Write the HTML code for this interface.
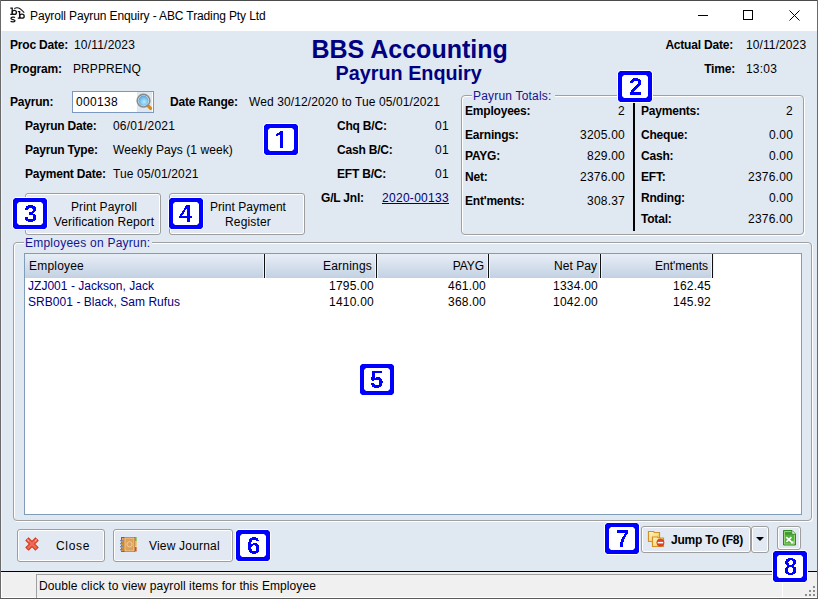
<!DOCTYPE html><html><head><meta charset="utf-8"><style>
html,body{margin:0;padding:0;}
body{width:818px;height:599px;overflow:hidden;position:relative;background:#e0e8f1;font-family:"Liberation Sans",sans-serif;}
.a{position:absolute;box-sizing:content-box;}
.t{position:absolute;white-space:nowrap;}
</style></head><body>
<div class="a" style="left:0px;top:0px;width:818px;height:599px;background:#e0e8f1;"></div>
<div class="a" style="left:0px;top:0px;width:818px;height:31px;background:#ffffff;"></div>
<div class="a" style="left:0px;top:0px;width:818px;height:1px;background:#4b4b4b;"></div>
<div class="a" style="left:0px;top:0px;width:1px;height:599px;background:#6a6a6a;"></div>
<div class="a" style="left:1px;top:31px;width:1px;height:540px;background:#eef3f9;"></div>
<div class="a" style="left:1px;top:572px;width:1px;height:26px;background:#ffffff;"></div>
<div class="a" style="left:1px;top:597px;width:816px;height:1px;background:#ffffff;"></div>
<div class="a" style="left:817px;top:0px;width:1px;height:599px;background:#6a6a6a;"></div>
<div class="a" style="left:0px;top:598px;width:818px;height:1px;background:#5a5a5a;"></div>
<div class="a" style="left:1px;top:571px;width:816px;height:1px;background:#000;"></div>
<div class="a" style="left:2px;top:572px;width:815px;height:25px;background:#f0f0f0;"></div>
<div class="a" style="left:36px;top:574px;width:746px;height:1px;background:#a0a0a0;"></div>
<div class="a" style="left:36px;top:574px;width:1px;height:24px;background:#a0a0a0;"></div>
<div class="a" style="left:782px;top:574px;width:1px;height:24px;background:#ffffff;"></div>
<svg class="a" style="left:0px;top:0px" width="30" height="30" viewBox="0 0 30 30">
<g stroke="#111" stroke-width="1.3" fill="none">
<path d="M10.3,8.2 H12.2 V14.4 H10.3"/>
<ellipse cx="14.3" cy="12.4" rx="2.1" ry="2.0"/>
<path d="M15,17.6 C14.2,16.9 11,16.8 11,18.4 C11,19.8 15,19.3 15,20.8 C15,22.3 11.6,22.1 10.6,21.3"/>
<path d="M17.8,11.6 H19.6 V18.2 H17.8"/>
<ellipse cx="21.9" cy="16.2" rx="2.3" ry="2.0"/>
<path d="M14.3,8.6 Q18.5,5.6 24.2,12.6" stroke-width="1.1"/>
</g>
</svg>
<div class="t" style="top:10.00px;font-size:12px;line-height:12px;color:#000;letter-spacing:0.066px;left:30px;letter-spacing:-0.12px;">Payroll Payrun Enquiry - ABC Trading Pty Ltd</div>
<div class="a" style="left:698px;top:15px;width:10px;height:1px;background:#000;"></div>
<div class="a" style="left:743px;top:10px;width:8px;height:8px;border:1px solid #000;"></div>
<svg class="a" style="left:789px;top:10px" width="11" height="11" viewBox="0 0 11 11"><path d="M0.5,0.5 L10.5,10.5 M10.5,0.5 L0.5,10.5" stroke="#000" stroke-width="1"/></svg>
<div class="t" style="top:39.00px;font-size:12px;line-height:12px;color:#000000;font-weight:bold;letter-spacing:-0.2px;left:10px;">Proc Date:</div>
<div class="t" style="top:39.00px;font-size:12px;line-height:12px;color:#000000;letter-spacing:0.194px;left:74px;">10/11/2023</div>
<div class="t" style="top:63.00px;font-size:12px;line-height:12px;color:#000000;font-weight:bold;letter-spacing:-0.2px;left:10px;">Program:</div>
<div class="t" style="top:63.00px;font-size:12px;line-height:12px;color:#000000;letter-spacing:0.082px;left:73px;">PRPPRENQ</div>
<div class="t" style="top:36.50px;font-size:25px;line-height:25px;color:#000080;font-weight:bold;letter-spacing:-0.2px;left:409.6px;transform:translateX(-50%);letter-spacing:0;">BBS Accounting</div>
<div class="t" style="top:64.10px;font-size:19.8px;line-height:19.8px;color:#000080;font-weight:bold;letter-spacing:-0.2px;left:408.7px;transform:translateX(-50%);letter-spacing:0;">Payrun Enquiry</div>
<div class="t" style="top:39.00px;font-size:12px;line-height:12px;color:#000000;font-weight:bold;letter-spacing:-0.2px;right:85px;">Actual Date:</div>
<div class="t" style="top:39.00px;font-size:12px;line-height:12px;color:#000000;left:746px;letter-spacing:0.1px;">10/11/2023</div>
<div class="t" style="top:63.00px;font-size:12px;line-height:12px;color:#000000;font-weight:bold;letter-spacing:-0.2px;right:83px;">Time:</div>
<div class="t" style="top:63.00px;font-size:12px;line-height:12px;color:#000000;letter-spacing:0.194px;left:746px;">13:03</div>
<div class="t" style="top:96.00px;font-size:12px;line-height:12px;color:#000000;font-weight:bold;letter-spacing:-0.2px;left:10px;">Payrun:</div>
<div class="a" style="left:72px;top:91px;width:80px;height:20px;border:1px solid #7a98c0;background:#fff;"></div>
<div class="a" style="left:137px;top:92px;width:15px;height:20px;background:#dfe7f0;"></div>
<svg class="a" style="left:132px;top:89px" width="24" height="26" viewBox="0 0 24 26">
<defs><radialGradient id="mg" cx="0.55" cy="0.6" r="0.6"><stop offset="0" stop-color="#b8ecfb"/><stop offset="1" stop-color="#4a9fe0"/></radialGradient></defs>
<path d="M15.2,15.8 L18.6,19.4" stroke="#d88a1a" stroke-width="3.2" stroke-linecap="round"/>
<circle cx="11.5" cy="11.7" r="5.6" fill="url(#mg)" stroke="#fff" stroke-width="1"/>
<circle cx="11.5" cy="11.7" r="6.3" fill="none" stroke="#8a8a8a" stroke-width="1.6"/>
</svg>
<div class="t" style="top:96.00px;font-size:12px;line-height:12px;color:#000000;letter-spacing:0.326px;left:76px;">000138</div>
<div class="t" style="top:96.00px;font-size:12px;line-height:12px;color:#000000;font-weight:bold;letter-spacing:-0.2px;left:170px;">Date Range:</div>
<div class="t" style="top:96.00px;font-size:12px;line-height:12px;color:#000000;letter-spacing:0.100px;left:249px;">Wed 30/12/2020 to Tue 05/01/2021</div>
<div class="t" style="top:120.00px;font-size:12px;line-height:12px;color:#000000;font-weight:bold;letter-spacing:-0.2px;left:25px;">Payrun Date:</div>
<div class="t" style="top:120.00px;font-size:12px;line-height:12px;color:#000000;letter-spacing:0.194px;left:113px;">06/01/2021</div>
<div class="t" style="top:144.00px;font-size:12px;line-height:12px;color:#000000;font-weight:bold;letter-spacing:-0.2px;left:25px;">Payrun Type:</div>
<div class="t" style="top:144.00px;font-size:12px;line-height:12px;color:#000000;letter-spacing:0.065px;left:113px;">Weekly Pays (1 week)</div>
<div class="t" style="top:168.00px;font-size:12px;line-height:12px;color:#000000;font-weight:bold;letter-spacing:-0.2px;left:25px;">Payment Date:</div>
<div class="t" style="top:168.00px;font-size:12px;line-height:12px;color:#000000;letter-spacing:0.138px;left:113px;">Tue 05/01/2021</div>
<div class="t" style="top:120.00px;font-size:12px;line-height:12px;color:#000000;font-weight:bold;letter-spacing:-0.2px;left:337px;">Chq B/C:</div>
<div class="t" style="top:120.00px;font-size:12px;line-height:12px;color:#000000;letter-spacing:0.326px;right:369px;">01</div>
<div class="t" style="top:144.00px;font-size:12px;line-height:12px;color:#000000;font-weight:bold;letter-spacing:-0.2px;left:337px;">Cash B/C:</div>
<div class="t" style="top:144.00px;font-size:12px;line-height:12px;color:#000000;letter-spacing:0.326px;right:369px;">01</div>
<div class="t" style="top:168.00px;font-size:12px;line-height:12px;color:#000000;font-weight:bold;letter-spacing:-0.2px;left:337px;">EFT B/C:</div>
<div class="t" style="top:168.00px;font-size:12px;line-height:12px;color:#000000;letter-spacing:0.326px;right:369px;">01</div>
<div class="t" style="top:192.00px;font-size:12px;line-height:12px;color:#000000;font-weight:bold;letter-spacing:-0.2px;left:321px;">G/L Jnl:</div>
<div class="t" style="top:192.00px;font-size:12px;line-height:12px;color:#000080;letter-spacing:0.294px;right:369px;text-decoration:underline;">2020-00133</div>
<div class="a" style="left:25px;top:193px;width:134px;height:40px;border:1px solid #9e9e9e;border-radius:3px;background:#e2e9f2;box-shadow:inset 0 0 0 1px #fff;"></div>
<div class="t" style="top:201.00px;font-size:12px;line-height:12px;color:#000000;letter-spacing:0.101px;left:104px;transform:translateX(-50%);">Print Payroll</div>
<div class="t" style="top:216.00px;font-size:12px;line-height:12px;color:#000000;letter-spacing:0.120px;left:104px;transform:translateX(-50%);">Verification Report</div>
<div class="a" style="left:169px;top:193px;width:134px;height:40px;border:1px solid #9e9e9e;border-radius:3px;background:#e2e9f2;box-shadow:inset 0 0 0 1px #fff;"></div>
<div class="t" style="top:201.00px;font-size:12px;line-height:12px;color:#000000;letter-spacing:0.049px;left:248px;transform:translateX(-50%);">Print Payment</div>
<div class="t" style="top:216.00px;font-size:12px;line-height:12px;color:#000000;letter-spacing:0.165px;left:248px;transform:translateX(-50%);">Register</div>
<div class="a" style="left:461px;top:95px;width:341px;height:138px;border:1px solid #a0a0a0;border-radius:4px;box-shadow:inset 1px 1px 0 #fff, 1px 1px 0 #fff;"></div>
<div class="a" style="left:472px;top:89px;width:83px;height:12px;background:#e0e8f1;"></div>
<div class="t" style="top:90.00px;font-size:12px;line-height:12px;color:#14148f;left:473px;letter-spacing:0.194px;">Payrun Totals:</div>
<div class="a" style="left:633px;top:103px;width:2px;height:128px;background:#000;"></div>
<div class="t" style="top:105.00px;font-size:12px;line-height:12px;color:#000000;font-weight:bold;letter-spacing:-0.2px;left:465px;">Employees:</div>
<div class="t" style="top:105.00px;font-size:12px;line-height:12px;color:#000000;letter-spacing:0.326px;right:193px;">2</div>
<div class="t" style="top:129.00px;font-size:12px;line-height:12px;color:#000000;font-weight:bold;letter-spacing:-0.2px;left:465px;">Earnings:</div>
<div class="t" style="top:129.00px;font-size:12px;line-height:12px;color:#000000;letter-spacing:0.232px;right:193px;">3205.00</div>
<div class="t" style="top:150.00px;font-size:12px;line-height:12px;color:#000000;font-weight:bold;letter-spacing:-0.2px;left:465px;">PAYG:</div>
<div class="t" style="top:150.00px;font-size:12px;line-height:12px;color:#000000;letter-spacing:0.216px;right:193px;">829.00</div>
<div class="t" style="top:171.00px;font-size:12px;line-height:12px;color:#000000;font-weight:bold;letter-spacing:-0.2px;left:465px;">Net:</div>
<div class="t" style="top:171.00px;font-size:12px;line-height:12px;color:#000000;letter-spacing:0.232px;right:193px;">2376.00</div>
<div class="t" style="top:195.00px;font-size:12px;line-height:12px;color:#000000;font-weight:bold;letter-spacing:-0.2px;left:465px;">Ent'ments:</div>
<div class="t" style="top:195.00px;font-size:12px;line-height:12px;color:#000000;letter-spacing:0.216px;right:193px;">308.37</div>
<div class="t" style="top:105.00px;font-size:12px;line-height:12px;color:#000000;font-weight:bold;letter-spacing:-0.2px;left:641px;">Payments:</div>
<div class="t" style="top:105.00px;font-size:12px;line-height:12px;color:#000000;letter-spacing:0.326px;right:25px;">2</div>
<div class="t" style="top:129.00px;font-size:12px;line-height:12px;color:#000000;font-weight:bold;letter-spacing:-0.2px;left:641px;">Cheque:</div>
<div class="t" style="top:129.00px;font-size:12px;line-height:12px;color:#000000;letter-spacing:0.161px;right:25px;">0.00</div>
<div class="t" style="top:150.00px;font-size:12px;line-height:12px;color:#000000;font-weight:bold;letter-spacing:-0.2px;left:641px;">Cash:</div>
<div class="t" style="top:150.00px;font-size:12px;line-height:12px;color:#000000;letter-spacing:0.161px;right:25px;">0.00</div>
<div class="t" style="top:171.00px;font-size:12px;line-height:12px;color:#000000;font-weight:bold;letter-spacing:-0.2px;left:641px;">EFT:</div>
<div class="t" style="top:171.00px;font-size:12px;line-height:12px;color:#000000;letter-spacing:0.232px;right:25px;">2376.00</div>
<div class="t" style="top:192.00px;font-size:12px;line-height:12px;color:#000000;font-weight:bold;letter-spacing:-0.2px;left:641px;">Rnding:</div>
<div class="t" style="top:192.00px;font-size:12px;line-height:12px;color:#000000;letter-spacing:0.161px;right:25px;">0.00</div>
<div class="t" style="top:213.00px;font-size:12px;line-height:12px;color:#000000;font-weight:bold;letter-spacing:-0.2px;left:641px;">Total:</div>
<div class="t" style="top:213.00px;font-size:12px;line-height:12px;color:#000000;letter-spacing:0.232px;right:25px;">2376.00</div>
<div class="a" style="left:13px;top:242px;width:797px;height:277px;border:1px solid #a0a0a0;border-radius:4px;box-shadow:inset 1px 1px 0 #fff, 1px 1px 0 #fff;"></div>
<div class="a" style="left:24px;top:236px;width:128px;height:12px;background:#e0e8f1;"></div>
<div class="t" style="top:237.00px;font-size:12px;line-height:12px;color:#14148f;left:25px;letter-spacing:0.233px;">Employees on Payrun:</div>
<div class="a" style="left:24px;top:253px;width:776px;height:260px;border:1px solid #7f9db9;background:#fff;"></div>
<div class="a" style="left:25px;top:254px;width:688px;height:24px;background:linear-gradient(#e8eef6,#c2d1e3);"></div>
<div class="a" style="left:263px;top:254px;width:3px;height:24px;background:#f0f4f8;"></div>
<div class="a" style="left:264px;top:254px;width:1px;height:24px;background:#101010;"></div>
<div class="a" style="left:375px;top:254px;width:3px;height:24px;background:#f0f4f8;"></div>
<div class="a" style="left:376px;top:254px;width:1px;height:24px;background:#101010;"></div>
<div class="a" style="left:487px;top:254px;width:3px;height:24px;background:#f0f4f8;"></div>
<div class="a" style="left:488px;top:254px;width:1px;height:24px;background:#101010;"></div>
<div class="a" style="left:599px;top:254px;width:3px;height:24px;background:#f0f4f8;"></div>
<div class="a" style="left:600px;top:254px;width:1px;height:24px;background:#101010;"></div>
<div class="a" style="left:711px;top:254px;width:3px;height:24px;background:#f0f4f8;"></div>
<div class="a" style="left:712px;top:254px;width:1px;height:24px;background:#101010;"></div>
<div class="t" style="top:260.00px;font-size:12px;line-height:12px;color:#000000;letter-spacing:0.205px;left:29px;">Employee</div>
<div class="t" style="top:260.00px;font-size:12px;line-height:12px;color:#000000;letter-spacing:0.205px;right:446px;">Earnings</div>
<div class="t" style="top:260.00px;font-size:12px;line-height:12px;color:#000000;letter-spacing:-0.086px;right:334px;">PAYG</div>
<div class="t" style="top:260.00px;font-size:12px;line-height:12px;color:#000000;letter-spacing:0.045px;right:221px;">Net Pay</div>
<div class="t" style="top:260.00px;font-size:12px;line-height:12px;color:#000000;letter-spacing:0.002px;right:110px;">Ent'ments</div>
<div class="t" style="top:280.00px;font-size:12px;line-height:12px;color:#000080;letter-spacing:0.028px;left:28px;">JZJ001 - Jackson, Jack</div>
<div class="t" style="top:280.00px;font-size:12px;line-height:12px;color:#000000;letter-spacing:0.232px;right:444px;">1795.00</div>
<div class="t" style="top:280.00px;font-size:12px;line-height:12px;color:#000000;letter-spacing:0.216px;right:332px;">461.00</div>
<div class="t" style="top:280.00px;font-size:12px;line-height:12px;color:#000000;letter-spacing:0.232px;right:220px;">1334.00</div>
<div class="t" style="top:280.00px;font-size:12px;line-height:12px;color:#000000;letter-spacing:0.216px;right:107px;">162.45</div>
<div class="t" style="top:296.00px;font-size:12px;line-height:12px;color:#000080;letter-spacing:0.051px;left:28px;">SRB001 - Black, Sam Rufus</div>
<div class="t" style="top:296.00px;font-size:12px;line-height:12px;color:#000000;letter-spacing:0.232px;right:444px;">1410.00</div>
<div class="t" style="top:296.00px;font-size:12px;line-height:12px;color:#000000;letter-spacing:0.216px;right:332px;">368.00</div>
<div class="t" style="top:296.00px;font-size:12px;line-height:12px;color:#000000;letter-spacing:0.232px;right:220px;">1042.00</div>
<div class="t" style="top:296.00px;font-size:12px;line-height:12px;color:#000000;letter-spacing:0.216px;right:107px;">145.92</div>
<svg class="a" style="left:359px;top:363px" width="36" height="33" viewBox="0 0 36 33">
<polygon points="3,0 33,0 36,3 36,30 33,33 3,33 0,30 0,3" fill="#fff"/>
<polygon points="3,1 33,1 35,3 35,30 33,32 3,32 1,30 1,3" fill="#0000ff"/>
<polygon points="7,5 29,5 31,7 31,26 29,28 7,28 5,26 5,7" fill="#fff"/>
</svg>
<svg class="a" style="left:360px;top:364px" width="34" height="31" viewBox="0 0 34 31" shape-rendering="crispEdges"><g fill="#0000ff"><rect x="12" y="7" width="10" height="1"/><rect x="12" y="8" width="10" height="1"/><rect x="12" y="9" width="3" height="1"/><rect x="12" y="10" width="3" height="1"/><rect x="12" y="11" width="3" height="1"/><rect x="12" y="12" width="3" height="1"/><rect x="11" y="13" width="4" height="1"/><rect x="16" y="13" width="4" height="1"/><rect x="11" y="14" width="10" height="1"/><rect x="11" y="15" width="11" height="1"/><rect x="12" y="16" width="2" height="1"/><rect x="19" y="16" width="3" height="1"/><rect x="19" y="17" width="4" height="1"/><rect x="19" y="18" width="4" height="1"/><rect x="11" y="19" width="3" height="1"/><rect x="19" y="19" width="3" height="1"/><rect x="11" y="20" width="4" height="1"/><rect x="19" y="20" width="3" height="1"/><rect x="12" y="21" width="10" height="1"/><rect x="12" y="22" width="9" height="1"/><rect x="14" y="23" width="5" height="1"/></g></svg>
<div class="a" style="left:17px;top:529px;width:86px;height:31px;border:1px solid #9e9e9e;border-radius:3px;background:#e2e9f2;box-shadow:inset 0 0 0 1px #fff;"></div>
<svg class="a" style="left:24px;top:536px" width="16" height="16" viewBox="0 0 16 16">
<path d="M4.6,4.6 L11.4,11.4 M11.4,4.6 L4.6,11.4" stroke="#cf3a22" stroke-width="4.8" stroke-linecap="square"/>
<path d="M4.6,4.6 L11.4,11.4 M11.4,4.6 L4.6,11.4" stroke="#f06a52" stroke-width="2.6" stroke-linecap="square"/>
<path d="M3.2,3.6 L5,5.2 M12.8,3.6 L11,5.2" stroke="#ffc8b8" stroke-width="1" />
</svg>
<div class="t" style="top:540.00px;font-size:12px;line-height:12px;color:#000000;left:56px;letter-spacing:0.7px;">Close</div>
<div class="a" style="left:113px;top:529px;width:118px;height:31px;border:1px solid #9e9e9e;border-radius:3px;background:#e2e9f2;box-shadow:inset 0 0 0 1px #fff;"></div>
<svg class="a" style="left:116px;top:533px" width="24" height="24" viewBox="0 0 24 24">
<rect x="5" y="4" width="14" height="15" rx="0.8" fill="#b87026"/>
<rect x="5.5" y="4.5" width="13" height="14" fill="#c98538" stroke="#9a5c1c" stroke-width="1"/>
<rect x="9" y="5" width="9" height="13" fill="#dea15a" stroke="#f2c890" stroke-width="1"/>
<rect x="19" y="4" width="1.6" height="4.5" fill="#6cb82a"/>
<rect x="19" y="9" width="1.6" height="4.5" fill="#f4b820"/>
<rect x="19" y="14" width="1.6" height="4.5" fill="#e84818"/>
<circle cx="13.5" cy="11.3" r="2.6" fill="none" stroke="#f4d4a0" stroke-width="0.9"/>
<g fill="#7a8aa8"><rect x="4" y="7" width="3" height="1.4"/><rect x="4" y="10" width="3" height="1.4"/><rect x="4" y="13" width="3" height="1.4"/><rect x="4" y="16" width="3" height="1.4"/></g>
<g fill="#e89a30"><rect x="5" y="8.2" width="2" height="1"/><rect x="5" y="11.2" width="2" height="1"/><rect x="5" y="14.2" width="2" height="1"/><rect x="5" y="17.2" width="2" height="1"/></g>
<rect x="6" y="5.5" width="1.5" height="1" fill="#f4d8b0"/>
</svg>
<div class="t" style="top:540.00px;font-size:12px;line-height:12px;color:#000000;letter-spacing:0.192px;left:149px;">View Journal</div>
<div class="a" style="left:641px;top:526px;width:108px;height:25px;border:1px solid #9e9e9e;border-radius:3px;background:#e2e9f2;box-shadow:inset 0 0 0 1px #fff;"></div>
<svg class="a" style="left:644px;top:527px" width="24" height="24" viewBox="0 0 24 24">
<defs><linearGradient id="fg" x1="0" y1="0" x2="1" y2="1"><stop offset="0" stop-color="#fff8c8"/><stop offset="1" stop-color="#f2c850"/></linearGradient></defs>
<path d="M4.5,4.5 h5 l1,1 h5 v9 h-11 z" fill="url(#fg)" stroke="#d39028" stroke-width="1.2"/>
<path d="M8.5,10 h5 l1,1 h5 v8.5 h-11 z" fill="url(#fg)" stroke="#d39028" stroke-width="1.2"/>
<circle cx="16.4" cy="15.6" r="3.6" fill="#e2432a" stroke="#c83218" stroke-width="0.6"/>
<rect x="13.6" y="14.9" width="5.6" height="1.5" fill="#fff"/>
</svg>
<div class="t" style="top:534.00px;font-size:12px;line-height:12px;color:#000000;font-weight:bold;letter-spacing:-0.2px;left:671px;">Jump To (F8)</div>
<div class="a" style="left:751px;top:526px;width:16px;height:25px;border:1px solid #9e9e9e;border-radius:3px;background:#e2e9f2;box-shadow:inset 0 0 0 1px #fff;"></div>
<svg class="a" style="left:756px;top:537px" width="8" height="5" viewBox="0 0 8 5"><polygon points="0,0 8,0 4,4" fill="#000"/></svg>
<div class="a" style="left:777px;top:526px;width:22px;height:22px;border:1px solid #9e9e9e;border-radius:3px;background:#e2e9f2;box-shadow:inset 0 0 0 1px #fff;"></div>
<svg class="a" style="left:774px;top:524px" width="30" height="28" viewBox="0 0 30 28">
<path d="M9.5,6.5 h8.5 l3.5,3.5 v11 h-12 z" fill="#55b03c" stroke="#2e8a20" stroke-width="1"/>
<path d="M10.5,7.5 h7 l3,3 v9.5 h-10 z" fill="none" stroke="#93d577" stroke-width="1"/>
<rect x="11" y="8" width="6" height="3" fill="#449c30"/>
<path d="M17.5,6.5 v4 h4" fill="#2e8a20"/>
<path d="M18.3,7 v2.7 h2.7 z" fill="#fff"/>
<path d="M12.2,13.2 L18.2,18.6 M17.4,13.2 L12.4,17.8" stroke="#fff" stroke-width="1.7"/>
<path d="M16.8,19.6 L19.6,19.6 L19.3,16.6 z" fill="#fff"/>
</svg>
<div class="a" style="left:813px;top:586px;width:2px;height:2px;background:#8c8c8c;"></div>
<div class="a" style="left:809px;top:590px;width:2px;height:2px;background:#8c8c8c;"></div>
<div class="a" style="left:813px;top:590px;width:2px;height:2px;background:#8c8c8c;"></div>
<div class="a" style="left:805px;top:594px;width:2px;height:2px;background:#8c8c8c;"></div>
<div class="a" style="left:809px;top:594px;width:2px;height:2px;background:#8c8c8c;"></div>
<div class="a" style="left:813px;top:594px;width:2px;height:2px;background:#8c8c8c;"></div>
<div class="t" style="top:580.00px;font-size:12px;line-height:12px;color:#000000;letter-spacing:0.094px;left:39px;">Double click to view payroll items for this Employee</div>
<svg class="a" style="left:263px;top:123px" width="36" height="33" viewBox="0 0 36 33">
<polygon points="3,0 33,0 36,3 36,30 33,33 3,33 0,30 0,3" fill="#fff"/>
<polygon points="3,1 33,1 35,3 35,30 33,32 3,32 1,30 1,3" fill="#0000ff"/>
<polygon points="7,5 29,5 31,7 31,26 29,28 7,28 5,26 5,7" fill="#fff"/>
</svg>
<svg class="a" style="left:264px;top:124px" width="34" height="31" viewBox="0 0 34 31" shape-rendering="crispEdges"><g fill="#0000ff"><rect x="16" y="7" width="3" height="17"/><rect x="15" y="8" width="1" height="3"/><rect x="14" y="9" width="1" height="2"/><rect x="13" y="9" width="1" height="3"/><rect x="12" y="10" width="1" height="2"/></g></svg>
<svg class="a" style="left:617px;top:70px" width="36" height="33" viewBox="0 0 36 33">
<polygon points="3,0 33,0 36,3 36,30 33,33 3,33 0,30 0,3" fill="#fff"/>
<polygon points="3,1 33,1 35,3 35,30 33,32 3,32 1,30 1,3" fill="#0000ff"/>
<polygon points="7,5 29,5 31,7 31,26 29,28 7,28 5,26 5,7" fill="#fff"/>
</svg>
<svg class="a" style="left:618px;top:71px" width="34" height="31" viewBox="0 0 34 31" shape-rendering="crispEdges"><g fill="#0000ff"><rect x="15" y="7" width="5" height="1"/><rect x="14" y="8" width="8" height="1"/><rect x="13" y="9" width="10" height="1"/><rect x="12" y="10" width="4" height="1"/><rect x="20" y="10" width="3" height="1"/><rect x="12" y="11" width="3" height="1"/><rect x="20" y="11" width="3" height="1"/><rect x="20" y="12" width="3" height="1"/><rect x="19" y="13" width="4" height="1"/><rect x="18" y="14" width="4" height="1"/><rect x="17" y="15" width="4" height="1"/><rect x="16" y="16" width="4" height="1"/><rect x="15" y="17" width="4" height="1"/><rect x="14" y="18" width="4" height="1"/><rect x="13" y="19" width="4" height="1"/><rect x="13" y="20" width="3" height="1"/><rect x="12" y="21" width="11" height="1"/><rect x="12" y="22" width="11" height="1"/><rect x="12" y="23" width="11" height="1"/></g></svg>
<svg class="a" style="left:12px;top:197px" width="36" height="33" viewBox="0 0 36 33">
<polygon points="3,0 33,0 36,3 36,30 33,33 3,33 0,30 0,3" fill="#fff"/>
<polygon points="3,1 33,1 35,3 35,30 33,32 3,32 1,30 1,3" fill="#0000ff"/>
<polygon points="7,5 29,5 31,7 31,26 29,28 7,28 5,26 5,7" fill="#fff"/>
</svg>
<svg class="a" style="left:13px;top:198px" width="34" height="31" viewBox="0 0 34 31" shape-rendering="crispEdges"><g fill="#0000ff"><rect x="15" y="7" width="5" height="1"/><rect x="13" y="8" width="9" height="1"/><rect x="13" y="9" width="10" height="1"/><rect x="12" y="10" width="4" height="1"/><rect x="19" y="10" width="4" height="1"/><rect x="12" y="11" width="3" height="1"/><rect x="20" y="11" width="3" height="1"/><rect x="20" y="12" width="3" height="1"/><rect x="19" y="13" width="3" height="1"/><rect x="16" y="14" width="5" height="1"/><rect x="16" y="15" width="4" height="1"/><rect x="16" y="16" width="6" height="1"/><rect x="20" y="17" width="3" height="1"/><rect x="20" y="18" width="3" height="1"/><rect x="12" y="19" width="3" height="1"/><rect x="20" y="19" width="3" height="1"/><rect x="12" y="20" width="3" height="1"/><rect x="20" y="20" width="3" height="1"/><rect x="12" y="21" width="11" height="1"/><rect x="13" y="22" width="9" height="1"/><rect x="15" y="23" width="5" height="1"/></g></svg>
<svg class="a" style="left:168px;top:197px" width="36" height="33" viewBox="0 0 36 33">
<polygon points="3,0 33,0 36,3 36,30 33,33 3,33 0,30 0,3" fill="#fff"/>
<polygon points="3,1 33,1 35,3 35,30 33,32 3,32 1,30 1,3" fill="#0000ff"/>
<polygon points="7,5 29,5 31,7 31,26 29,28 7,28 5,26 5,7" fill="#fff"/>
</svg>
<svg class="a" style="left:169px;top:198px" width="34" height="31" viewBox="0 0 34 31" shape-rendering="crispEdges"><g fill="#0000ff"><rect x="17" y="7" width="4" height="1"/><rect x="16" y="8" width="5" height="1"/><rect x="16" y="9" width="5" height="1"/><rect x="15" y="10" width="6" height="1"/><rect x="15" y="11" width="2" height="1"/><rect x="18" y="11" width="3" height="1"/><rect x="14" y="12" width="2" height="1"/><rect x="18" y="12" width="3" height="1"/><rect x="13" y="13" width="3" height="1"/><rect x="18" y="13" width="3" height="1"/><rect x="13" y="14" width="2" height="1"/><rect x="18" y="14" width="3" height="1"/><rect x="12" y="15" width="3" height="1"/><rect x="18" y="15" width="3" height="1"/><rect x="11" y="16" width="3" height="1"/><rect x="18" y="16" width="3" height="1"/><rect x="11" y="17" width="2" height="1"/><rect x="18" y="17" width="3" height="1"/><rect x="10" y="18" width="13" height="1"/><rect x="10" y="19" width="13" height="1"/><rect x="18" y="20" width="3" height="1"/><rect x="18" y="21" width="3" height="1"/><rect x="18" y="22" width="3" height="1"/><rect x="18" y="23" width="3" height="1"/></g></svg>
<svg class="a" style="left:235px;top:529px" width="36" height="33" viewBox="0 0 36 33">
<polygon points="3,0 33,0 36,3 36,30 33,33 3,33 0,30 0,3" fill="#fff"/>
<polygon points="3,1 33,1 35,3 35,30 33,32 3,32 1,30 1,3" fill="#0000ff"/>
<polygon points="7,5 29,5 31,7 31,26 29,28 7,28 5,26 5,7" fill="#fff"/>
</svg>
<svg class="a" style="left:236px;top:530px" width="34" height="31" viewBox="0 0 34 31" shape-rendering="crispEdges"><g fill="#0000ff"><rect x="16" y="7" width="4" height="1"/><rect x="14" y="8" width="8" height="1"/><rect x="13" y="9" width="9" height="1"/><rect x="13" y="10" width="3" height="1"/><rect x="20" y="10" width="3" height="1"/><rect x="13" y="11" width="3" height="1"/><rect x="12" y="12" width="3" height="1"/><rect x="12" y="13" width="3" height="1"/><rect x="17" y="13" width="4" height="1"/><rect x="12" y="14" width="10" height="1"/><rect x="12" y="15" width="5" height="1"/><rect x="19" y="15" width="4" height="1"/><rect x="12" y="16" width="4" height="1"/><rect x="20" y="16" width="3" height="1"/><rect x="12" y="17" width="3" height="1"/><rect x="20" y="17" width="3" height="1"/><rect x="12" y="18" width="3" height="1"/><rect x="20" y="18" width="3" height="1"/><rect x="12" y="19" width="4" height="1"/><rect x="20" y="19" width="3" height="1"/><rect x="13" y="20" width="3" height="1"/><rect x="20" y="20" width="3" height="1"/><rect x="13" y="21" width="10" height="1"/><rect x="14" y="22" width="8" height="1"/><rect x="16" y="23" width="4" height="1"/></g></svg>
<svg class="a" style="left:604px;top:522px" width="36" height="33" viewBox="0 0 36 33">
<polygon points="3,0 33,0 36,3 36,30 33,33 3,33 0,30 0,3" fill="#fff"/>
<polygon points="3,1 33,1 35,3 35,30 33,32 3,32 1,30 1,3" fill="#0000ff"/>
<polygon points="7,5 29,5 31,7 31,26 29,28 7,28 5,26 5,7" fill="#fff"/>
</svg>
<svg class="a" style="left:605px;top:523px" width="34" height="31" viewBox="0 0 34 31" shape-rendering="crispEdges"><g fill="#0000ff"><rect x="12" y="7" width="11" height="1"/><rect x="12" y="8" width="11" height="1"/><rect x="12" y="9" width="11" height="1"/><rect x="20" y="10" width="3" height="1"/><rect x="19" y="11" width="3" height="1"/><rect x="19" y="12" width="2" height="1"/><rect x="18" y="13" width="3" height="1"/><rect x="17" y="14" width="3" height="1"/><rect x="17" y="15" width="3" height="1"/><rect x="16" y="16" width="3" height="1"/><rect x="16" y="17" width="3" height="1"/><rect x="16" y="18" width="3" height="1"/><rect x="15" y="19" width="3" height="1"/><rect x="15" y="20" width="3" height="1"/><rect x="15" y="21" width="3" height="1"/><rect x="15" y="22" width="3" height="1"/><rect x="15" y="23" width="3" height="1"/></g></svg>
<svg class="a" style="left:772px;top:550px" width="36" height="33" viewBox="0 0 36 33">
<polygon points="3,0 33,0 36,3 36,30 33,33 3,33 0,30 0,3" fill="#fff"/>
<polygon points="3,1 33,1 35,3 35,30 33,32 3,32 1,30 1,3" fill="#0000ff"/>
<polygon points="7,5 29,5 31,7 31,26 29,28 7,28 5,26 5,7" fill="#fff"/>
</svg>
<svg class="a" style="left:773px;top:551px" width="34" height="31" viewBox="0 0 34 31" shape-rendering="crispEdges"><g fill="#0000ff"><rect x="15" y="7" width="5" height="1"/><rect x="13" y="8" width="9" height="1"/><rect x="13" y="9" width="4" height="1"/><rect x="19" y="9" width="4" height="1"/><rect x="12" y="10" width="4" height="1"/><rect x="20" y="10" width="3" height="1"/><rect x="12" y="11" width="3" height="1"/><rect x="20" y="11" width="3" height="1"/><rect x="12" y="12" width="4" height="1"/><rect x="20" y="12" width="3" height="1"/><rect x="13" y="13" width="3" height="1"/><rect x="19" y="13" width="3" height="1"/><rect x="14" y="14" width="7" height="1"/><rect x="14" y="15" width="7" height="1"/><rect x="13" y="16" width="3" height="1"/><rect x="19" y="16" width="4" height="1"/><rect x="12" y="17" width="3" height="1"/><rect x="20" y="17" width="3" height="1"/><rect x="12" y="18" width="3" height="1"/><rect x="20" y="18" width="3" height="1"/><rect x="12" y="19" width="3" height="1"/><rect x="20" y="19" width="3" height="1"/><rect x="12" y="20" width="3" height="1"/><rect x="20" y="20" width="3" height="1"/><rect x="12" y="21" width="4" height="1"/><rect x="19" y="21" width="4" height="1"/><rect x="13" y="22" width="9" height="1"/><rect x="15" y="23" width="5" height="1"/></g></svg>
</body></html>
